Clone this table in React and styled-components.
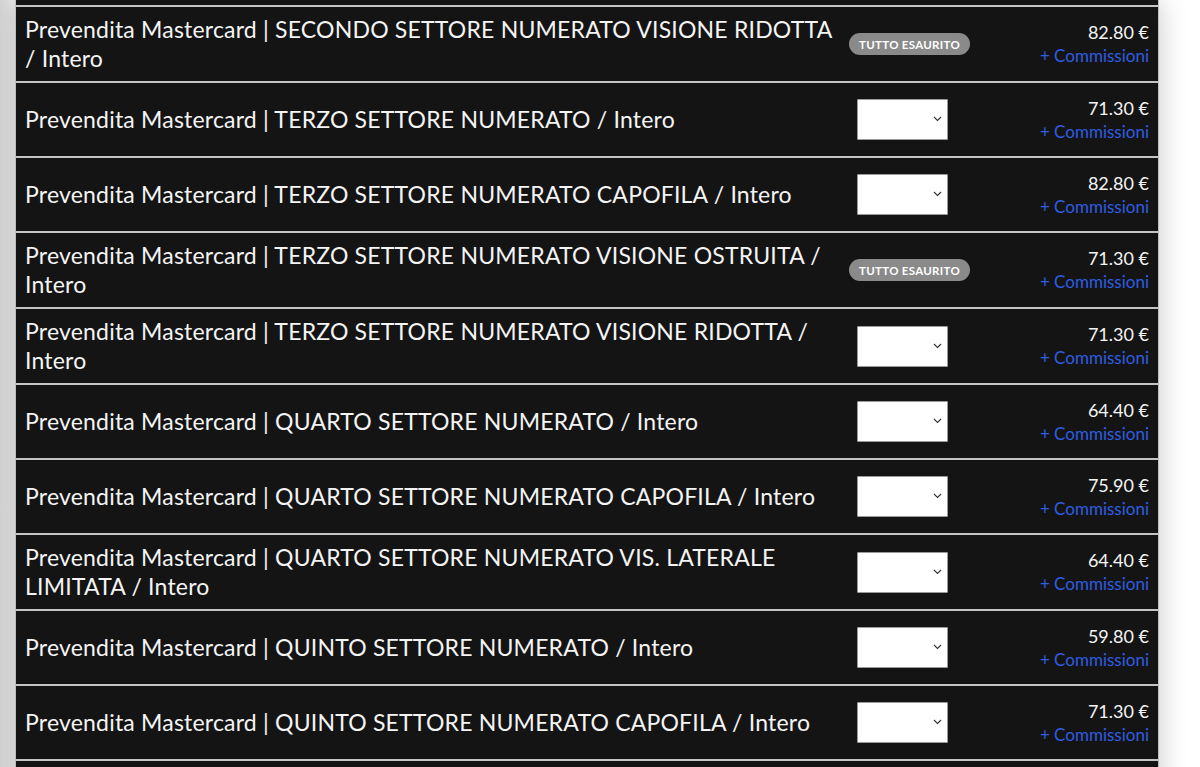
import React from 'react';
import styled, { createGlobalStyle } from 'styled-components';

const GlobalStyle = createGlobalStyle`
	html, body {
		margin: 0;
		padding: 0;
		background: #ffffff;
	}
	body {
		font-family: 'Lato', 'Noto Sans', sans-serif;
		overflow: hidden;
	}
`;

const tickets = [
	{ name: 'Prevendita Mastercard | SECONDO SETTORE NUMERATO VISIONE RIDOTTA / Intero', price: '82.80', soldOut: true },
	{ name: 'Prevendita Mastercard | TERZO SETTORE NUMERATO / Intero', price: '71.30' },
	{ name: 'Prevendita Mastercard | TERZO SETTORE NUMERATO CAPOFILA / Intero', price: '82.80' },
	{ name: 'Prevendita Mastercard | TERZO SETTORE NUMERATO VISIONE OSTRUITA / Intero', price: '71.30', soldOut: true },
	{ name: 'Prevendita Mastercard | TERZO SETTORE NUMERATO VISIONE RIDOTTA / Intero', price: '71.30' },
	{ name: 'Prevendita Mastercard | QUARTO SETTORE NUMERATO / Intero', price: '64.40' },
	{ name: 'Prevendita Mastercard | QUARTO SETTORE NUMERATO CAPOFILA / Intero', price: '75.90' },
	{ name: 'Prevendita Mastercard | QUARTO SETTORE NUMERATO VIS. LATERALE LIMITATA / Intero', price: '64.40' },
	{ name: 'Prevendita Mastercard | QUINTO SETTORE NUMERATO / Intero', price: '59.80' },
	{ name: 'Prevendita Mastercard | QUINTO SETTORE NUMERATO CAPOFILA / Intero', price: '71.30' },
	{ name: '', price: '' },
];

const Chevron = () => (
	<svg width="9" height="6" viewBox="0 0 9 6" fill="none">
		<path d="M1 1l3.5 3.5L8 1" stroke="#333" strokeWidth="1.1" />
	</svg>
);

const App = () => {
	return (
		<>
			<GlobalStyle />
			<Page>
				<Table>
					{tickets.map((t, index) => (
						<Row key={index}>
							<Name>{t.name}</Name>
							<Action>
								{t.name &&
									(t.soldOut ? (
										<Badge>Tutto esaurito</Badge>
									) : (
										<SelectBox>
											<select defaultValue="">
												<option value=""></option>
												<option value="1">1</option>
												<option value="2">2</option>
											</select>
											<Arrow>
												<Chevron />
											</Arrow>
										</SelectBox>
									))}
							</Action>
							<Price>
								{t.price && (
									<>
										<Amount>{t.price} €</Amount>
										<Fees href="#">+ Commissioni</Fees>
									</>
								)}
							</Price>
						</Row>
					))}
				</Table>
			</Page>
		</>
	);
};

export default App;

const Page = styled.div`
	height: 767px;
	overflow: hidden;
	padding: 0 41px 0 15px;
	background: linear-gradient(to right, #d6d6d6 0, #ececec 15px, #ffffff 15px);
`;
const Table = styled.div`
	background: #141414;
	padding-top: 5px;
	border-left: 1px solid #bdbdbd;
	border-right: 1px solid #bdbdbd;
	box-shadow: 0 0 26px rgba(0, 0, 0, 0.22);
`;
const Row = styled.div`
	display: grid;
	grid-template-columns: 1fr 125px 165px;
	column-gap: 10px;
	align-items: center;
	min-height: 75px;
	padding: 0 9px;
	border-top: 2px solid #c4c4c4;
	box-sizing: border-box;
`;
const Name = styled.div`
	color: #f4f4f4;
	font-size: 23px;
	letter-spacing: 0.2px;
	line-height: 29px;
	padding: 8px 0;
`;
const Action = styled.div`
	display: flex;
	align-items: center;
`;
const Badge = styled.span`
	display: inline-flex;
	align-items: center;
	height: 22px;
	padding: 0 10px;
	border-radius: 11px;
	background: #8a8a8a;
	color: #ffffff;
	font-size: 11.5px;
	font-weight: 700;
	letter-spacing: 0.3px;
	text-transform: uppercase;
`;
const SelectBox = styled.div`
	position: relative;
	display: flex;
	margin-left: 8px;
	select {
		appearance: none;
		width: 91px;
		height: 41px;
		background: #ffffff;
		border: 1px solid #9a9a9a;
		border-radius: 1px;
		font-family: inherit;
		font-size: 15px;
		outline: none;
	}
`;
const Arrow = styled.span`
	position: absolute;
	right: 6px;
	top: 17px;
	display: flex;
	pointer-events: none;
`;
const Price = styled.div`
	display: flex;
	flex-direction: column;
	align-items: flex-end;
	gap: 4px;
`;
const Amount = styled.span`
	color: #f4f4f4;
	font-size: 18px;
	line-height: 20px;
`;
const Fees = styled.a`
	color: #2f5ee2;
	font-size: 17px;
	line-height: 20px;
	text-decoration: none;
`;
